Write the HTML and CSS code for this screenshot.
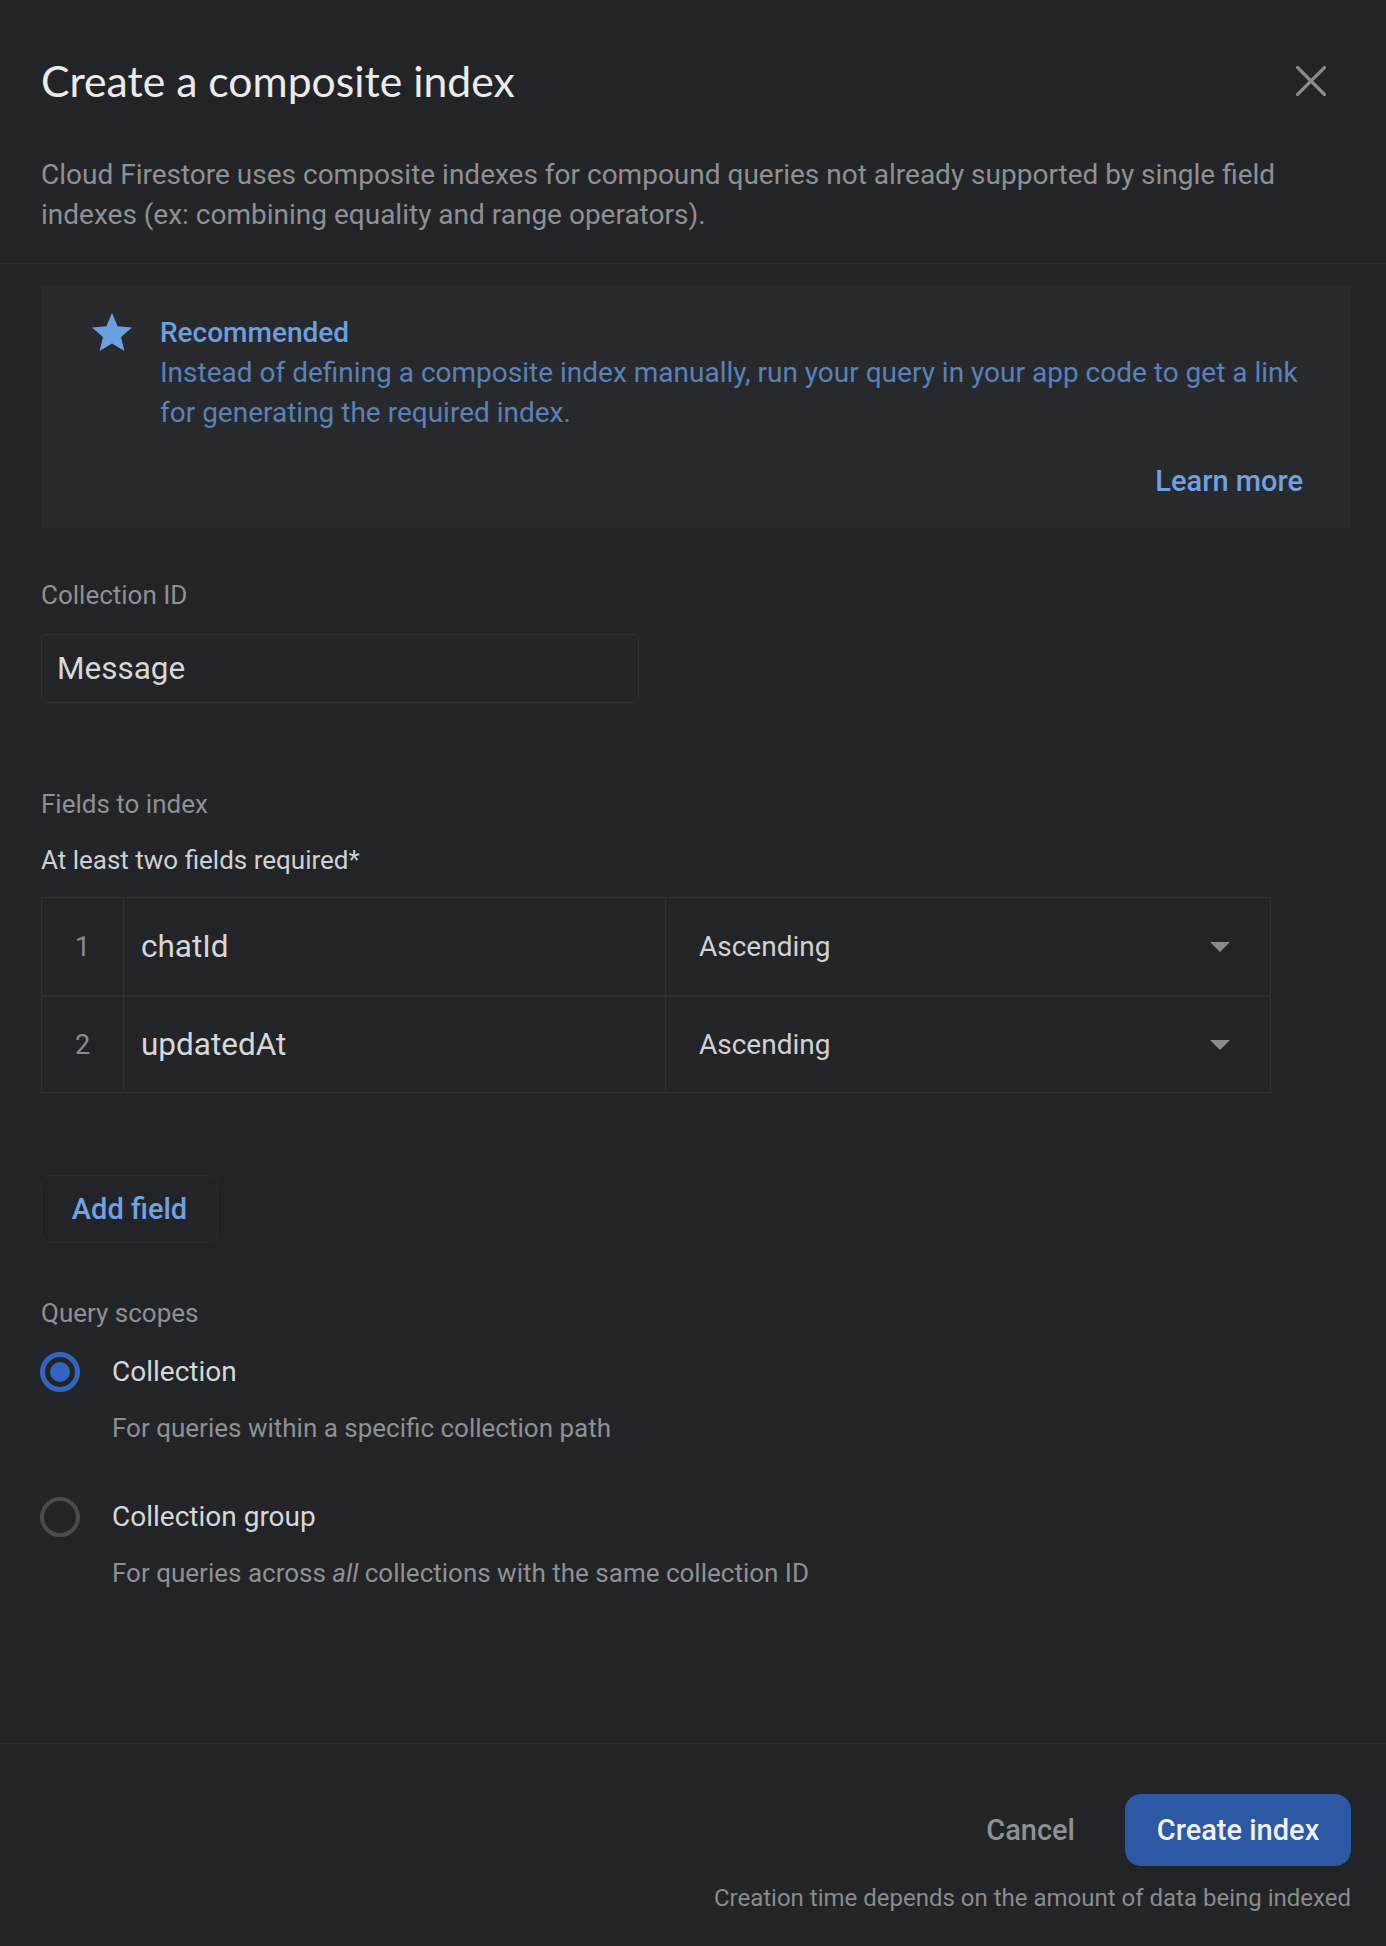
FILE: index.html
```html
<!DOCTYPE html>
<html lang="en">
<head>
<meta charset="utf-8">
<title>Create a composite index</title>
<link rel="stylesheet" href="styles.css">
</head>
<body>
<div class="dialog">
  <header class="head">
    <div class="head-row">
      <h1 class="title">Create a composite index</h1>
      <button class="close" aria-label="Close">
        <svg width="30" height="30" viewBox="0 0 30 30"><path d="M1.5 1.5L28.5 28.5M28.5 1.5L1.5 28.5" stroke="#8a8b8d" stroke-width="3.2" stroke-linecap="square" fill="none"/></svg>
      </button>
    </div>
    <p class="desc">Cloud Firestore uses composite indexes for compound queries not already supported by single field indexes (ex: combining equality and range operators).</p>
  </header>

  <main class="body">
    <section class="rec">
      <div class="rec-main">
        <svg class="star" width="48" height="48" viewBox="0 0 24 24"><path fill="#6a9fe0" d="M12 17.27L18.18 21l-1.64-7.03L22 9.24l-7.19-.61L12 2 9.19 8.63 2 9.24l5.46 4.73L5.82 21z"/></svg>
        <div class="rec-text">
          <div class="rec-title">Recommended</div>
          <div class="rec-body">Instead of defining a composite index manually, run your query in your app code to get a link for generating the required index.</div>
        </div>
      </div>
      <div class="rec-actions"><a class="link">Learn more</a></div>
    </section>

    <div class="label label-coll">Collection ID</div>
    <div class="input">Message</div>

    <div class="label label-fields">Fields to index</div>
    <div class="hint">At least two fields required*</div>

    <div class="table">
      <div class="row">
        <div class="cell num">1</div>
        <div class="cell field">chatId</div>
        <div class="cell order"><span>Ascending</span><span class="caret"></span></div>
      </div>
      <div class="row">
        <div class="cell num">2</div>
        <div class="cell field">updatedAt</div>
        <div class="cell order"><span>Ascending</span><span class="caret"></span></div>
      </div>
    </div>

    <button class="add">Add field</button>

    <div class="label label-scopes">Query scopes</div>
    <div class="radio-group">
      <div class="radio-item">
        <div class="radio-line"><span class="radio on"></span><span class="radio-label">Collection</span></div>
        <div class="radio-sub">For queries within a specific collection path</div>
      </div>
      <div class="radio-item">
        <div class="radio-line"><span class="radio"></span><span class="radio-label">Collection group</span></div>
        <div class="radio-sub">For queries across <i>all</i> collections with the same collection ID</div>
      </div>
    </div>
  </main>

  <footer class="foot">
    <div class="actions">
      <button class="cancel">Cancel</button>
      <button class="primary">Create index</button>
    </div>
    <div class="note">Creation time depends on the amount of data being indexed</div>
  </footer>
</div>
</body>
</html>
```

FILE: styles.css
```css
* { box-sizing: border-box; }
html, body { margin: 0; padding: 0; }
body {
  background: #232427;
  font-family: Roboto, "Liberation Sans", Arial, sans-serif;
  color: #d4d5d7;
}
button { font-family: inherit; background: none; border: none; padding: 0; cursor: pointer; }

.dialog {
  min-height: 100vh;
  display: flex;
  flex-direction: column;
}

.head {
  padding: 56px 35px 0 41px;
  border-bottom: 1px solid #2c2d30;
}
.head-row {
  display: flex;
  justify-content: space-between;
  align-items: center;
  height: 50px;
}
.title {
  margin: 0;
  font-family: Lato, "Open Sans", sans-serif;
  font-weight: 400;
  font-size: 42.7px;
  line-height: 50px;
  color: #ebebec;
}
.close {
  width: 30px;
  height: 30px;
  margin-right: 25px;
  display: flex;
}
.desc {
  margin: 49px 0 0;
  padding-bottom: 28px;
  font-size: 28px;
  line-height: 40px;
  color: #8e9093;
  max-width: 1300px;
}

.body {
  flex: 1;
  padding: 21px 35px 0 41px;
  display: flex;
  flex-direction: column;
  align-items: flex-start;
}

.rec {
  align-self: stretch;
  background: #28292c;
  padding: 28px 48px 27px 47px;
}
.rec-main {
  display: flex;
  align-items: flex-start;
  gap: 24px;
}
.star { margin-top: -4px; flex: none; }
.rec-title {
  font-size: 28px;
  font-weight: 500;
  line-height: 40px;
  color: #6a9fe0;
}
.rec-body {
  font-size: 28px;
  line-height: 40px;
  color: #5882b9;
}
.rec-actions {
  display: flex;
  justify-content: flex-end;
  margin-top: 28px;
}
.link {
  font-size: 29px;
  font-weight: 500;
  line-height: 40px;
  color: #6ea2e3;
}

.label {
  font-size: 26px;
  line-height: 30px;
  color: #8e9093;
}
.label-coll { margin-top: 52px; }
.input {
  margin-top: 24px;
  width: 598px;
  height: 69px;
  border: 1px solid #2f3033;
  border-radius: 6px;
  padding: 0 15px;
  display: flex;
  align-items: center;
  font-size: 31.5px;
  color: #d6d7d8;
}
.label-fields { margin-top: 86px; }
.hint {
  margin-top: 26px;
  font-size: 26px;
  line-height: 30px;
  color: #cfd0d2;
}

.table {
  margin-top: 22px;
  width: 1230px;
  border: 1px solid #2f3033;
}
.row {
  display: grid;
  grid-template-columns: 81px 542px 1fr;
  height: 97px;
}
.row + .row { border-top: 2px solid #2f3033; }
.cell {
  display: flex;
  align-items: center;
}
.cell + .cell { border-left: 1px solid #2f3033; }
.num {
  justify-content: center;
  font-size: 27px;
  color: #8a8b8d;
}
.field {
  padding-left: 17px;
  font-size: 31.5px;
  color: #d6d7d8;
}
.order {
  padding: 0 40px 0 33px;
  justify-content: space-between;
  font-size: 28px;
  color: #d0d1d3;
}
.caret {
  width: 0;
  height: 0;
  border-left: 10px solid transparent;
  border-right: 10px solid transparent;
  border-top: 10px solid #8a8b8d;
}

.add {
  margin-top: 82px;
  width: 177px;
  height: 68px;
  border: 1px solid #2c2d30;
  border-radius: 10px;
  font-size: 29px;
  font-weight: 500;
  color: #6ea2e3;
}
.label-scopes { margin-top: 55px; }

.radio-group {
  margin-top: 24px;
  display: flex;
  flex-direction: column;
  gap: 54px;
}
.radio-line {
  display: flex;
  align-items: center;
  gap: 32px;
  margin-left: -1px;
}
.radio {
  width: 40px;
  height: 40px;
  border-radius: 50%;
  border: 4px solid #4a4b4e;
  flex: none;
  display: flex;
  align-items: center;
  justify-content: center;
}
.radio.on { border: 5px solid #3065c0; }
.radio.on::after {
  content: "";
  width: 20px;
  height: 20px;
  border-radius: 50%;
  background: #3065c0;
}
.radio-label {
  font-size: 28px;
  line-height: 40px;
  color: #d6d7d8;
}
.radio-sub {
  margin-top: 21px;
  padding-left: 71px;
  font-size: 26px;
  line-height: 30px;
  color: #8e9093;
}

.foot {
  border-top: 1px solid #2c2d30;
  padding: 50px 35px 33px 41px;
  display: flex;
  flex-direction: column;
  align-items: flex-end;
}
.actions {
  display: flex;
  align-items: center;
  gap: 50px;
}
.cancel {
  font-size: 29px;
  font-weight: 500;
  color: #8e9093;
}
.primary {
  width: 226px;
  height: 72px;
  border-radius: 16px;
  background: #2d58a3;
  font-size: 29px;
  font-weight: 500;
  color: #eef0f3;
}
.note {
  margin-top: 17px;
  font-size: 24px;
  line-height: 30px;
  color: #8a8b8d;
}
```
